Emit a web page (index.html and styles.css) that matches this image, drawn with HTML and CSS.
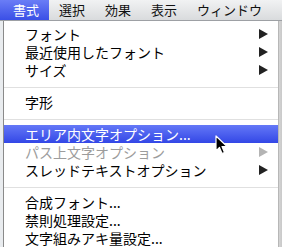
FILE: index.html
```html
<!DOCTYPE html>
<html lang="ja">
<head>
    <meta charset="UTF-8">
    <title>書式メニュー</title>
    <link rel="stylesheet" href="styles.css">
</head>
<body>
    <div class="menubar">
        <span class="menubar-item active">書式</span>
        <span class="menubar-item">選択</span>
        <span class="menubar-item">効果</span>
        <span class="menubar-item">表示</span>
        <span class="menubar-item">ウィンドウ</span>
    </div>
    <div class="stage">
        <div class="menu">
            <div class="item">フォント<span class="arrow"></span></div>
            <div class="item">最近使用したフォント<span class="arrow"></span></div>
            <div class="item">サイズ<span class="arrow"></span></div>
            <div class="sep"></div>
            <div class="item">字形</div>
            <div class="sep"></div>
            <div class="item selected">エリア内文字オプション...</div>
            <div class="item disabled">パス上文字オプション<span class="arrow"></span></div>
            <div class="item">スレッドテキストオプション<span class="arrow"></span></div>
            <div class="sep"></div>
            <div class="item">合成フォント...</div>
            <div class="item">禁則処理設定...</div>
            <div class="item">文字組みアキ量設定...</div>
        </div>
        <div class="edge"></div>
        <svg class="cursor" width="13" height="20" viewBox="0 0 13 20">
            <path d="M1 1 L1 16 L4.5 12.5 L7 18.5 L9.5 17.5 L7 11.5 L12 11.5 Z" fill="#000" stroke="#fff" stroke-width="1.2" stroke-linejoin="round"/>
        </svg>
    </div>
</body>
</html>
```

FILE: styles.css
```css
body {
    margin: 0;
    width: 282px;
    height: 247px;
    overflow: hidden;
    background: #e9ecef;
    font-family: "Noto Sans CJK JP", "Liberation Sans", sans-serif;
    font-size: 14px;
}

.menubar {
    display: flex;
    height: 21px;
    background: linear-gradient(#f1f2f3, #d9dbdd);
    border-bottom: 1px solid #9da0a4;
    box-sizing: border-box;
    font-size: 13px;
}

.menubar-item {
    flex-shrink: 0;
    white-space: nowrap;
    padding: 0 10px;
    color: #111;
    line-height: 20px;
}

.menubar-item.active {
    background: linear-gradient(#6a7df6, #3a4fe6);
    color: #fff;
    padding: 0 10px 0 13px;
}

.stage {
    position: relative;
    display: flex;
    height: 226px;
    padding-left: 3px;
}

.menu {
    width: 275px;
    background: #fff;
    border-left: 1px solid #8a8a8a;
    box-sizing: border-box;
    padding-top: 4px;
}

.edge {
    width: 4px;
    background: linear-gradient(90deg, #9a9a9a 0, #d4d4d4 1px, #c9c9c9);
}

.item {
    display: flex;
    align-items: center;
    height: 18px;
    padding-left: 21px;
    padding-right: 10px;
    color: #000;
    line-height: 18px;
    white-space: nowrap;
}

.item.selected {
    background: linear-gradient(#6478f7, #3347e6);
    color: #fff;
}

.item.disabled {
    color: #9c9c9c;
}

.arrow {
    margin-left: auto;
    width: 0;
    height: 0;
    border-top: 5px solid transparent;
    border-bottom: 5px solid transparent;
    border-left: 9px solid #222;
}

.item.disabled .arrow {
    border-left-color: #b4b4b4;
}

.sep {
    height: 14px;
    box-sizing: border-box;
    padding-top: 8px;
}

.sep::after {
    content: "";
    display: block;
    height: 1px;
    background: #e0e0e0;
}

.cursor {
    position: absolute;
    left: 215px;
    top: 114px;
}
```
